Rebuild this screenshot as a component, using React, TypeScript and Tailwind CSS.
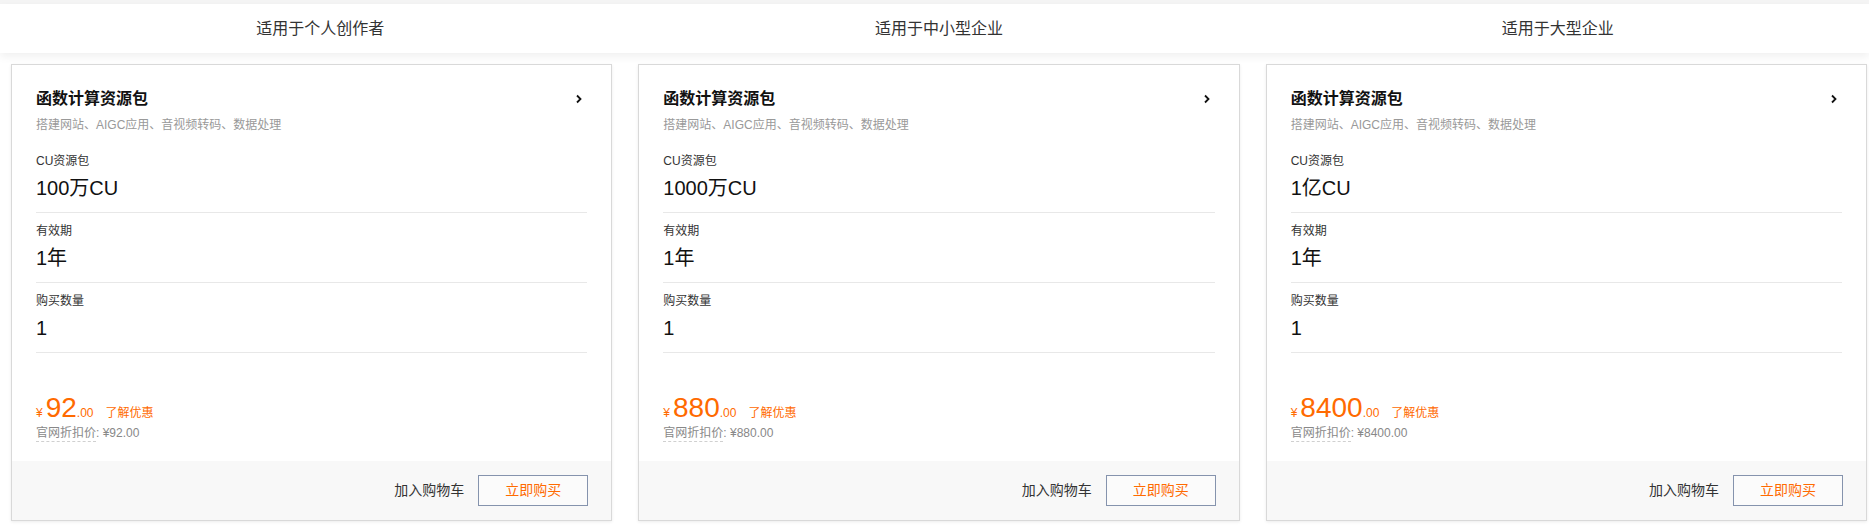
const tabs = ['适用于个人创作者', '适用于中小型企业', '适用于大型企业']

interface Plan {
  cu: string
  price: string
}

const plans: Plan[] = [
  { cu: '100万CU', price: '92' },
  { cu: '1000万CU', price: '880' },
  { cu: '1亿CU', price: '8400' },
]

function Chevron() {
  return (
    <svg width="8" height="10" viewBox="0 0 8 10" className="mr-[4px]">
      <path d="M2 1.5 L5.5 5 L2 8.5" fill="none" stroke="#111" strokeWidth="1.8" />
    </svg>
  )
}

function Field({ label, value }: { label: string; value: string }) {
  return (
    <div className="pt-[9px] pb-[10px] border-b border-[#e8e8e8]">
      <div className="text-[12px] leading-[18px] text-[#333]">{label}</div>
      <div className="mt-[4px] text-[20px] leading-[28px] text-[#111]">{value}</div>
    </div>
  )
}

function PlanCard({ plan }: { plan: Plan }) {
  return (
    <div className="flex-1 flex flex-col bg-white border border-[#d9d9d9] shadow-[0_1px_3px_rgba(0,0,0,0.08)]">
      <div className="px-[24px] pt-[22px]">
        <div className="flex items-center justify-between h-[24px]">
          <span className="text-[16px] leading-[24px] font-bold text-[#111]">函数计算资源包</span>
          <Chevron />
        </div>
        <div className="mt-[5px] text-[12px] leading-[18px] text-[#999]">
          搭建网站、AIGC应用、音视频转码、数据处理
        </div>
        <div className="mt-[9px]">
          <Field label="CU资源包" value={plan.cu} />
          <Field label="有效期" value="1年" />
          <Field label="购买数量" value="1" />
        </div>
        <div className="mt-[39px] flex items-baseline h-[32px] leading-[32px] text-[#ff6a00]">
          <span className="text-[12px] mr-[3px]">¥</span>
          <span className="text-[28px]">{plan.price}</span>
          <span className="text-[12px]">.00</span>
          <span className="text-[12px] ml-[12px]">了解优惠</span>
        </div>
        <div className="flex items-center text-[12px] leading-[18px] text-[#888] pb-[19px]">
          <span className="border-b border-dashed border-[#d0d0d0] leading-[16px]">官网折扣价</span>
          <span>: ¥{plan.price}.00</span>
        </div>
      </div>
      <div className="h-[59px] bg-[#f8f8f8] flex items-center justify-end gap-[14px] pr-[23px]">
        <span className="text-[14px] text-[#333]">加入购物车</span>
        <button className="w-[110px] h-[31px] border border-[#8593ad] text-[14px] text-[#ff6a00] bg-[#fbfbfb]">
          立即购买
        </button>
      </div>
    </div>
  )
}

export default function App() {
  return (
    <div className="min-h-screen bg-white font-['Liberation_Sans','Noto_Sans_CJK_SC',sans-serif]">
      <div className="h-[4px] bg-[#f4f4f4]" />
      <div className="relative bg-white shadow-[0_4px_8px_rgba(0,0,0,0.06)]">
        <div className="flex h-[49px] items-center pl-[11px] pr-[2px]">
          {tabs.map((t) => (
            <div key={t} className="flex-1 text-center text-[16px] text-[#333]">
              {t}
            </div>
          ))}
        </div>
      </div>
      <div className="flex gap-[26px] pl-[11px] pr-[2px] pt-[11px]">
        {plans.map((p) => (
          <PlanCard key={p.price} plan={p} />
        ))}
      </div>
    </div>
  )
}
